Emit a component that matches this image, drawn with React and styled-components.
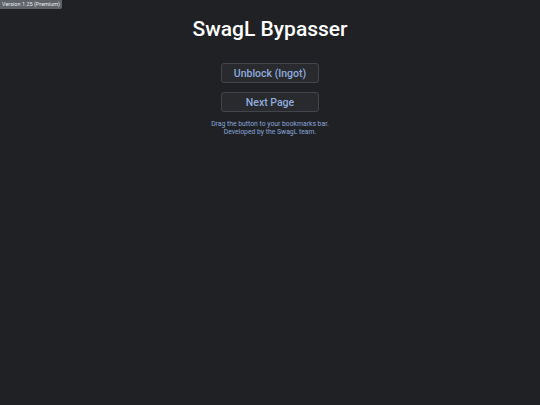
import React from 'react';
import styled, { createGlobalStyle } from 'styled-components';

const GlobalStyle = createGlobalStyle`
  html, body {
    margin: 0;
    padding: 0;
    background: #202124;
    font-family: Roboto, "Liberation Sans", sans-serif;
  }
`

const Page = styled.div`
  position: relative;
  width: 540px;
  height: 405px;
  background: #202124;
  display: flex;
  flex-direction: column;
  align-items: center;
`

const Version = styled.div`
  position: absolute;
  top: 0;
  left: 0;
  padding: 1px 2px;
  background: #5f6368;
  color: #e8eaed;
  font-size: 5.5px;
  line-height: 7px;
  border-bottom-right-radius: 2px;
`

const Title = styled.h1`
  margin: 16px 0 0;
  color: #ffffff;
  font-size: 21px;
  font-weight: 500;
  line-height: 26px;
`

const Buttons = styled.div`
  display: flex;
  flex-direction: column;
  gap: 9px;
  margin-top: 21px;
`

const Button = styled.button`
  width: 98px;
  height: 20px;
  padding: 0;
  background: #292a2d;
  border: 1px solid #42464c;
  border-radius: 3px;
  color: #8fabdf;
  font-family: Roboto, "Liberation Sans", sans-serif;
  font-size: 10.5px;
  font-weight: 500;
  cursor: pointer;
`

const Note = styled.p`
  margin: 9px 0 0;
  color: #88a6dc;
  font-size: 6.8px;
  line-height: 7.5px;
  text-align: center;
`

const App = () => {
  return (
    <Page>
      <GlobalStyle />
      <Version>Version 1.25 (Premium)</Version>
      <Title>SwagL Bypasser</Title>
      <Buttons>
        <Button>Unblock (Ingot)</Button>
        <Button>Next Page</Button>
      </Buttons>
      <Note>
        Drag the button to your bookmarks bar.<br />
        Developed by the SwagL team.
      </Note>
    </Page>
  );
};

export default App;
